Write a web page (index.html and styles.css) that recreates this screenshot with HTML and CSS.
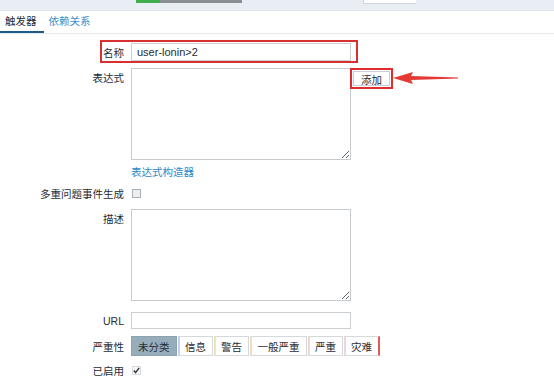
FILE: index.html
```html
<!DOCTYPE html>
<html lang="zh-CN">
<head>
  <meta charset="UTF-8">
  <meta name="viewport" content="width=device-width, initial-scale=1.0">
  <title>触发器</title>
  <link rel="stylesheet" href="styles.css">
</head>
<body>
  <div class="topbar">
    <div class="progress"><span class="done"></span></div>
    <div class="search"></div>
  </div>

  <div class="tabs">
    <a class="tab active">触发器</a>
    <a class="tab">依赖关系</a>
  </div>

  <form class="form">
    <div class="row row-name">
      <label class="label">名称</label>
      <input type="text" class="field" value="user-lonin&gt;2">
      <span class="mark mark-name"></span>
    </div>

    <div class="row row-area">
      <label class="label">表达式</label>
      <textarea class="area"></textarea>
      <div class="add-box"><button type="button" class="btn-add">添加</button></div>
      <svg class="arrow" width="66" height="14" viewBox="0 0 66 14">
        <path d="M0 7 L20 1 L18 5 L65 6.5 L65 7.5 L18 9 L20 13 Z" fill="#e53935"/>
      </svg>
    </div>

    <div class="row row-link">
      <span class="label"></span>
      <a class="link">表达式构造器</a>
    </div>

    <div class="row row-check">
      <label class="label">多重问题事件生成</label>
      <span class="check"></span>
    </div>

    <div class="row row-desc">
      <label class="label">描述</label>
      <textarea class="area"></textarea>
    </div>

    <div class="row row-url">
      <label class="label">URL</label>
      <input type="text" class="field field-url">
    </div>

    <div class="row row-sev">
      <label class="label">严重性</label>
      <div class="segments">
        <span class="seg selected">未分类</span>
        <span class="seg info">信息</span>
        <span class="seg warn">警告</span>
        <span class="seg avg">一般严重</span>
        <span class="seg high">严重</span>
        <span class="seg disaster">灾难</span>
      </div>
    </div>

    <div class="row row-enabled">
      <label class="label">已启用</label>
      <span class="check checked">
        <svg width="7" height="7" viewBox="0 0 8 8"><path d="M1 4 L3 6.5 L7 1" stroke="#333" stroke-width="1.6" fill="none"/></svg>
      </span>
    </div>
  </form>
</body>
</html>
```

FILE: styles.css
```css
body {
  margin: 0;
  background-color: #fff;
  color: #1f2c33;
  font-family: "Liberation Sans", Arial, "Noto Sans CJK SC", sans-serif;
  font-size: 10.5px;
}
.topbar {
  display: flex;
  height: 10px;
  background-color: #e8eef4;
  border-bottom: 1px solid #dde3ea;
}
.progress {
  display: flex;
  margin-left: 136px;
  width: 106px;
  height: 3px;
  background-color: #8a8f94;
}
.progress .done {
  width: 24px;
  background-color: #3fae4f;
}
.search {
  margin-left: 121px;
  width: 52px;
  height: 3px;
  background-color: #fff;
  border-left: 1px solid #cfd6dd;
  border-bottom: 1px solid #cfd6dd;
}
.tabs {
  display: flex;
  height: 22px;
  border-bottom: 1px solid #e6eaed;
}
.tab {
  padding: 0 7px 0 5px;
  line-height: 21px;
  color: #3a8fc9;
}
.tab.active {
  color: #1f2c33;
  border-bottom: 2px solid #1d5a86;
  line-height: 20px;
}
.form {
  padding-top: 9px;
}
.row {
  position: relative;
  display: flex;
  align-items: center;
  gap: 7px;
}
.label {
  flex: 0 0 124px;
  text-align: right;
}
.field {
  box-sizing: border-box;
  width: 220px;
  height: 18px;
  margin: 0;
  padding: 0 5px;
  border: 1px solid #c9cfd3;
  font: inherit;
  font-size: 11px;
  color: #1f2c33;
}
.field-url {
  height: 17px;
}
.area {
  box-sizing: border-box;
  width: 220px;
  height: 92px;
  margin: 0;
  border: 1px solid #c6cbcf;
  resize: both;
}
.row-area,
.row-desc {
  align-items: flex-start;
}
.row-area .label,
.row-desc .label {
  padding-top: 1px;
  line-height: 18px;
}
.row-area {
  margin-top: 7px;
}
.add-box {
  margin-left: -8px;
  padding: 1px;
  border: 2px solid #e02c2c;
}
.btn-add {
  display: block;
  width: 37px;
  height: 15px;
  padding: 0;
  border: 1px solid #c9cfd3;
  background-color: #fff;
  font: inherit;
  color: #1f2c33;
}
.arrow {
  position: absolute;
  left: 393px;
  top: 3px;
}
.mark-name {
  position: absolute;
  left: 100px;
  top: -3px;
  width: 254px;
  height: 19px;
  border: 2px solid #d8302f;
}
.row-link {
  margin-top: 4px;
  line-height: 16px;
}
.link {
  color: #2e86c4;
}
.row-check {
  margin-top: 6px;
  height: 14px;
}
.check {
  display: flex;
  align-items: center;
  justify-content: center;
  box-sizing: border-box;
  width: 9px;
  height: 9px;
  margin-left: 1px;
  border: 1px solid #a9b0b5;
  background-color: #eceff1;
}
.check.checked {
  border-color: #d5dade;
  background-color: #f7f8f9;
}
.row-desc {
  margin-top: 9px;
}
.row-url {
  margin-top: 11px;
}
.row-sev {
  margin-top: 7px;
}
.segments {
  display: flex;
  gap: 1px;
  height: 20px;
}
.seg {
  display: flex;
  align-items: center;
  padding: 0 5.5px;
  border: 1px solid #d4d9dc;
  background-color: #fff;
}
.seg.selected {
  padding: 0 6px;
  background-color: #98adbc;
  border-color: #8ea3b2;
}
.seg.info { border-left: 2px solid #c3d0ef; }
.seg.warn { border-left: 2px solid #f2e2b8; }
.seg.avg { border-left: 2px solid #f3dcc4; padding: 0 6px; }
.seg.high { border-left: 2px solid #efd8d0; }
.seg.disaster {
  border-left: 2px solid #f0d6d6;
  border-right: 2px solid #e05a5a;
}
.row-enabled {
  margin-top: 7px;
  height: 14px;
}
```
